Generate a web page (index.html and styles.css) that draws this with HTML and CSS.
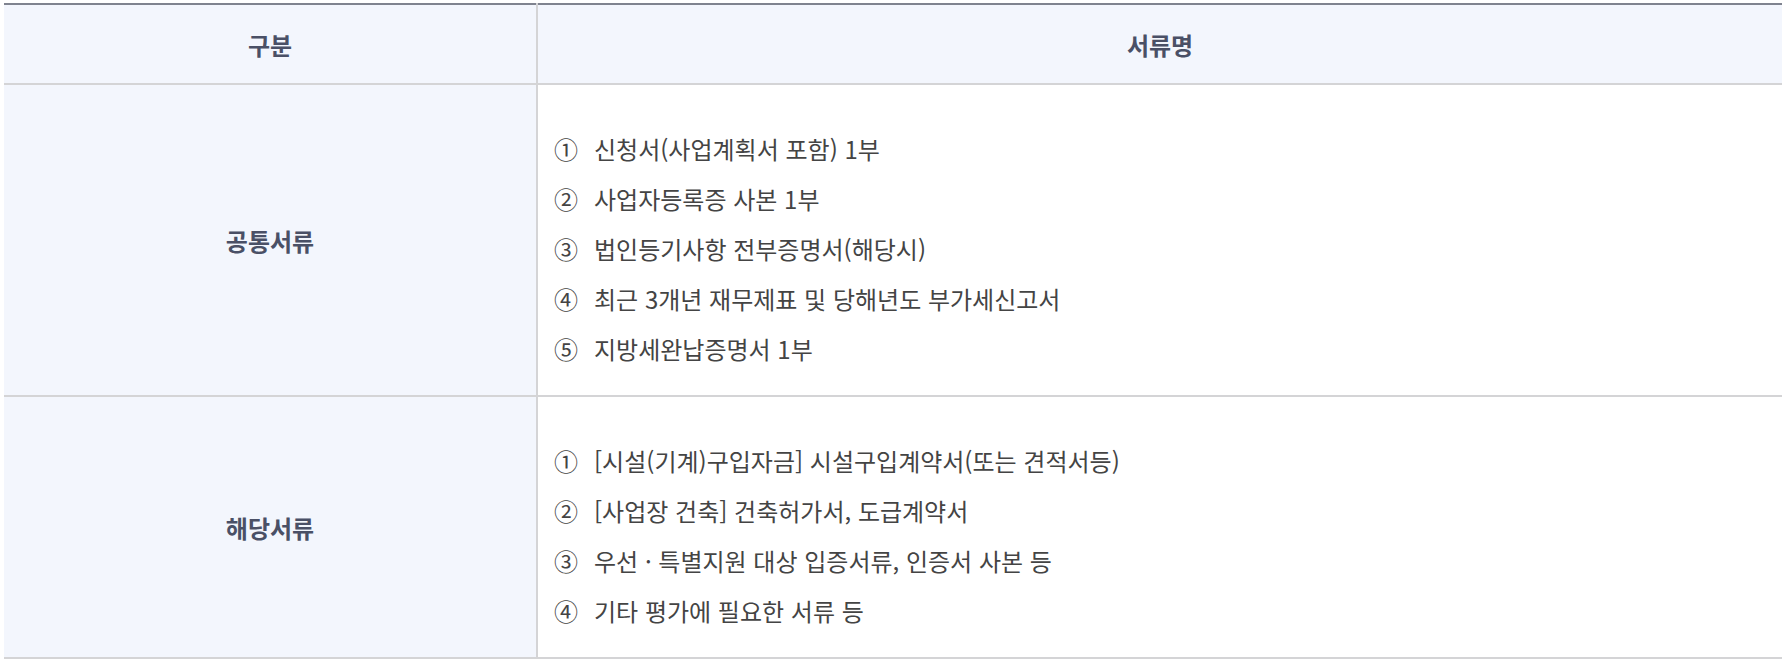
FILE: index.html
```html
<!DOCTYPE html>
<html lang="ko">
<head>
<meta charset="utf-8">
<title>제출서류</title>
<link rel="stylesheet" href="styles.css">
</head>
<body>
<table class="doc-table">
  <colgroup>
    <col class="col-kind">
    <col class="col-docs">
  </colgroup>
  <thead>
    <tr>
      <th class="head-cell">구분</th>
      <th class="head-cell head-docs">서류명</th>
    </tr>
  </thead>
  <tbody>
    <tr>
      <th class="kind-cell">공통서류</th>
      <td class="docs-cell">
        <ul class="doc-list">
          <li class="doc-item"><span class="num">①</span><span class="txt">신청서(사업계획서 포함) 1부</span></li>
          <li class="doc-item"><span class="num">②</span><span class="txt">사업자등록증 사본 1부</span></li>
          <li class="doc-item"><span class="num">③</span><span class="txt">법인등기사항 전부증명서(해당시)</span></li>
          <li class="doc-item"><span class="num">④</span><span class="txt">최근 3개년 재무제표 및 당해년도 부가세신고서</span></li>
          <li class="doc-item"><span class="num">⑤</span><span class="txt">지방세완납증명서 1부</span></li>
        </ul>
      </td>
    </tr>
    <tr>
      <th class="kind-cell">해당서류</th>
      <td class="docs-cell">
        <ul class="doc-list">
          <li class="doc-item"><span class="num">①</span><span class="txt">[시설(기계)구입자금] 시설구입계약서(또는 견적서등)</span></li>
          <li class="doc-item"><span class="num">②</span><span class="txt">[사업장 건축] 건축허가서, 도급계약서</span></li>
          <li class="doc-item"><span class="num">③</span><span class="txt">우선 · 특별지원 대상 입증서류, 인증서 사본 등</span></li>
          <li class="doc-item"><span class="num">④</span><span class="txt">기타 평가에 필요한 서류 등</span></li>
        </ul>
      </td>
    </tr>
  </tbody>
</table>
</body>
</html>
```

FILE: styles.css
```css
html, body {
  background: #ffffff;
}
body {
  margin: 3px 4px 0 4px;
  font-family: "Noto Sans CJK KR", "Noto Sans", sans-serif;
  font-size: 24px;
  color: #444444;
}
.doc-table {
  width: 100%;
  border-collapse: collapse;
  border-top: 2px solid #7f838f;
  border-bottom: 2px solid #d4d4d6;
  table-layout: fixed;
}
.col-kind {
  width: 533px;
}
.head-cell {
  height: 78px;
  padding: 0;
  background: #f3f6fd;
  color: #4a5066;
  font-weight: 700;
  font-size: 24px;
  text-align: center;
  vertical-align: middle;
  border-bottom: 2px solid #d4d4d6;
}
.head-docs {
  border-left: 2px solid #d4d4d6;
}
.kind-cell {
  padding: 0;
  background: #f3f6fd;
  color: #4a5066;
  font-weight: 700;
  text-align: center;
  vertical-align: middle;
  border-bottom: 2px solid #d4d4d6;
}
.docs-cell {
  padding: 39px 16px 21px 16px;
  border-left: 2px solid #d4d4d6;
  border-bottom: 2px solid #d4d4d6;
  vertical-align: top;
  text-align: left;
}
.doc-list {
  list-style: none;
  margin: 0;
  padding: 0;
}
.doc-item {
  display: flex;
  align-items: center;
  height: 50px;
  line-height: 50px;
}
.num {
  width: 40px;
  flex: none;
}
.txt {
  white-space: nowrap;
}
```
